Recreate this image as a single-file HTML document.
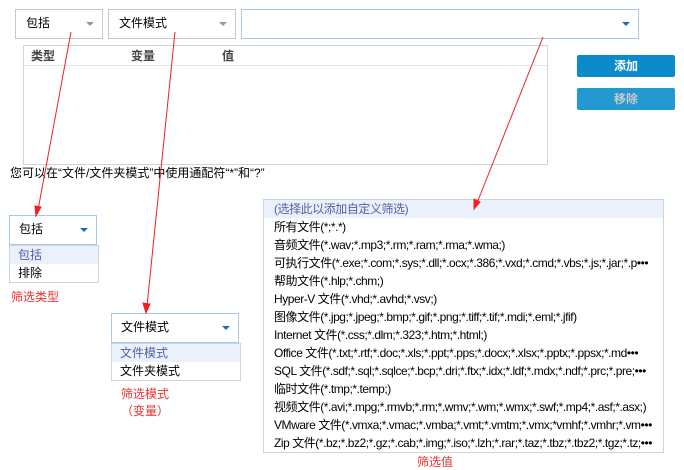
<html><head><style>
body{margin:0;width:684px;height:468px;background:#fff;position:relative;font-family:"Liberation Sans","Noto Sans CJK SC",sans-serif;font-size:12px;color:#000;overflow:hidden}
.a{position:absolute;box-sizing:border-box}
.dd{border:1px solid #c8c8c8;padding-left:10px;line-height:27px}
.dd2{border:1px solid #a9c8ea;padding-left:9px;line-height:27px}
.tri{position:absolute;right:8px;top:12px;width:0;height:0;border-left:4px solid transparent;border-right:4px solid transparent;border-top:4px solid #999}
.dd2 .tri{border-top-color:#1a6fb5}
.lst{border:1px solid #ccd4de;background:#fff}
.lst div{height:18px;line-height:18px;padding-left:8px;white-space:nowrap;overflow:hidden}
.big div{letter-spacing:-0.45px;padding-left:10px;padding-right:6px;text-overflow:ellipsis}
.hl{background:#ebf1fa;color:#5060a8}
.red{color:#f03030;position:absolute}
.btn{color:#fff;font-weight:bold;text-align:center;line-height:22px;border-radius:2px}
</style></head><body>
<div class="a dd" style="left:15px;top:9px;width:88px;height:30px">包括<span class="tri"></span></div>
<div class="a dd" style="left:108px;top:9px;width:128px;height:30px">文件模式<span class="tri"></span></div>
<div class="a dd2" style="left:241px;top:9px;width:398px;height:30px"><span class="tri"></span></div>
<div class="a" style="left:23px;top:45px;width:525px;height:120px;border:1px solid #ccd4de"></div>
<div class="a" style="left:24px;top:65px;width:523px;height:1px;background:#e6e6e6"></div>
<div class="a" style="left:31px;top:47px;font-weight:bold;color:#444">类型</div>
<div class="a" style="left:131px;top:47px;font-weight:bold;color:#444">变量</div>
<div class="a" style="left:222px;top:47px;font-weight:bold;color:#444">值</div>
<div class="a" style="left:10px;top:164px">您可以在“文件/文件夹模式”中使用通配符“*”和“?”</div>
<div class="a btn" style="left:577px;top:55px;width:98px;height:22px;background:#0b8bcb">添加</div>
<div class="a btn" style="left:577px;top:88px;width:98px;height:22px;background:#2498d0;color:#ccc">移除</div>
<div class="a dd2" style="left:9px;top:215px;width:88px;height:30px">包括<span class="tri"></span></div>
<div class="a lst" style="left:9px;top:245px;width:90px;height:38px"><div class="hl">包括</div><div>排除</div></div>
<div class="red" style="left:11px;top:288px">筛选类型</div>
<div class="a dd2" style="left:111px;top:313px;width:128px;height:30px">文件模式<span class="tri"></span></div>
<div class="a lst" style="left:111px;top:343px;width:130px;height:38px"><div class="hl">文件模式</div><div>文件夹模式</div></div>
<div class="red" style="left:121px;top:385px">筛选模式</div>
<div class="red" style="left:121px;top:402px">（变量）</div>
<div class="a lst big" style="left:263px;top:199px;width:401px;height:254px">
<div class="hl">(选择此以添加自定义筛选)</div>
<div>所有文件(*;*.*)</div>
<div>音频文件(*.wav;*.mp3;*.rm;*.ram;*.rma;*.wma;)</div>
<div>可执行文件(*.exe;*.com;*.sys;*.dll;*.ocx;*.386;*.vxd;*.cmd;*.vbs;*.js;*.jar;*.p•••</div>
<div>帮助文件(*.hlp;*.chm;)</div>
<div>Hyper-V 文件(*.vhd;*.avhd;*.vsv;)</div>
<div>图像文件(*.jpg;*.jpeg;*.bmp;*.gif;*.png;*.tiff;*.tif;*.mdi;*.eml;*.jfif)</div>
<div>Internet 文件(*.css;*.dlm;*.323;*.htm;*.html;)</div>
<div>Office 文件(*.txt;*.rtf;*.doc;*.xls;*.ppt;*.pps;*.docx;*.xlsx;*.pptx;*.ppsx;*.md•••</div>
<div>SQL 文件(*.sdf;*.sql;*.sqlce;*.bcp;*.dri;*.ftx;*.idx;*.ldf;*.mdx;*.ndf;*.prc;*.pre;•••</div>
<div>临时文件(*.tmp;*.temp;)</div>
<div>视频文件(*.avi;*.mpg;*.rmvb;*.rm;*.wmv;*.wm;*.wmx;*.swf;*.mp4;*.asf;*.asx;)</div>
<div>VMware 文件(*.vmxa;*.vmac;*.vmba;*.vmt;*.vmtm;*.vmx;*vmhf;*.vmhr;*.vm•••</div>
<div>Zip 文件(*.bz;*.bz2;*.gz;*.cab;*.img;*.iso;*.lzh;*.rar;*.taz;*.tbz;*.tbz2;*.tgz;*.tz;•••</div>
</div>
<div class="red" style="left:417px;top:453px">筛选值</div>
<svg class="a" style="left:0;top:0" width="684" height="468">
<g stroke="#f02020" stroke-width="1" fill="#f02020">
<line x1="71" y1="32" x2="38" y2="210"/><polygon points="36,216 35,206 41,207" />
<line x1="175" y1="32" x2="147" y2="306"/><polygon points="146,313 143,303 150,304"/>
<line x1="543" y1="37" x2="477" y2="203"/><polygon points="474,209 474,199 480,202"/>
</g></svg>
</body></html>
